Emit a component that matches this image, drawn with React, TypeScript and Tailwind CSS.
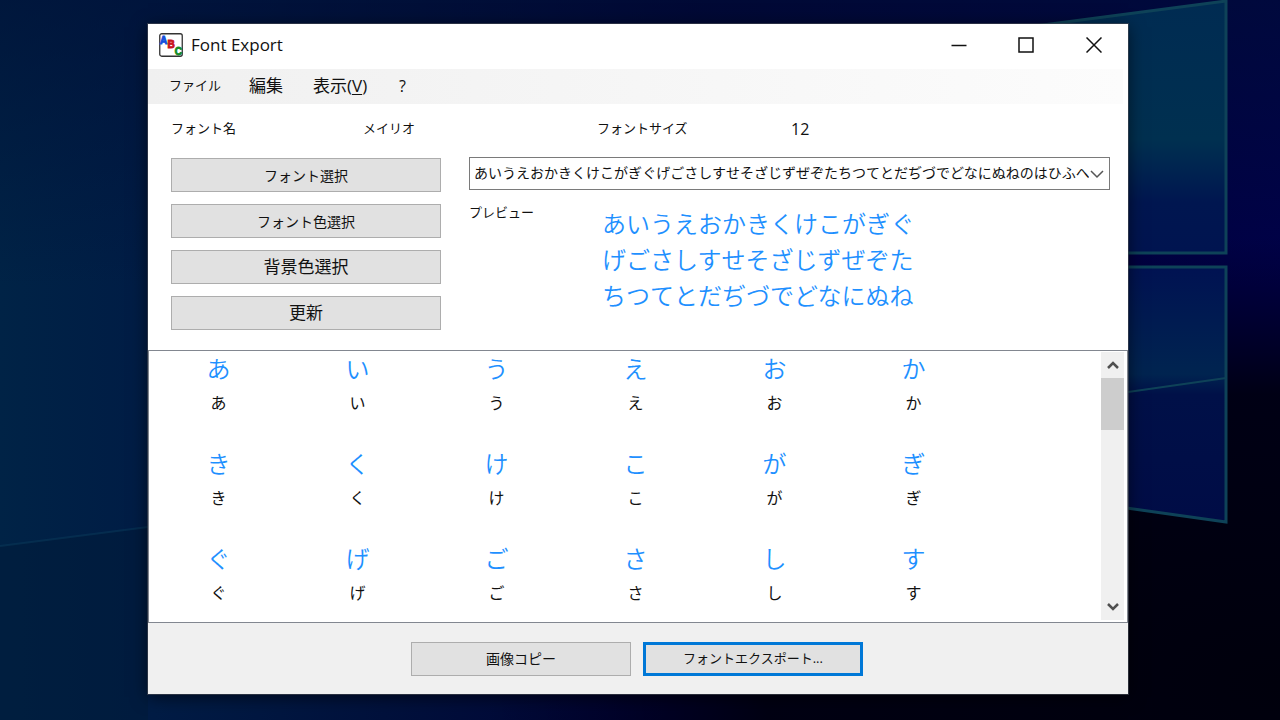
import { useState } from "react";

const kana =
  "あいうえおかきくけこがぎぐげごさしすせそざじずぜぞたちつてとだぢづでどなにぬねのはひふへ";

const previewLines = [
  "あいうえおかきくけこがぎぐ",
  "げごさしすせそざじずぜぞた",
  "ちつてとだぢづでどなにぬね",
];

const glyphs = Array.from(kana).slice(0, 18);

export default function App() {
  return (
    <main className="relative flex min-h-screen flex-col bg-[#00000f] pb-[26px] pl-[148px] pr-[152px] pt-6 font-['Open_Sans','Noto_Sans_CJK_JP',sans-serif] text-[#111]">
      <Wallpaper />
      <section className="relative flex flex-1 flex-col bg-white shadow-[0_0_0_1px_rgba(70,75,85,0.6),0_3px_16px_rgba(0,0,0,0.6)]">
        <TitleBar />
        <MenuBar />
        <Settings />
        <GlyphList />
        <footer className="flex h-[71px] items-center justify-center gap-3 bg-[#f0f0f0] pr-[2px] text-[14px]">
          <button className="h-[34px] w-[220px] border border-[#adadad] bg-[#e1e1e1]">
            画像コピー
          </button>
          <button className="h-[34px] w-[220px] border-[3px] border-[#0078d7] bg-[#e1e1e1] text-[13px]">
            フォントエクスポート...
          </button>
        </footer>
      </section>
    </main>
  );
}

function TitleBar() {
  return (
    <header className="mb-[3px] flex h-[42px] items-center justify-between pl-[11px]">
      <div className="flex items-center gap-2">
        <AppIcon />
        <h1 className="text-[17px] leading-6">Font Export</h1>
      </div>
      <div className="flex h-full">
        <button aria-label="最小化" className="grid w-[67px] place-items-center">
          <svg width="16" height="16" viewBox="0 0 16 16" stroke="#111" strokeWidth="1.5">
            <path d="M0.5 8.5h15" />
          </svg>
        </button>
        <button aria-label="最大化" className="grid w-[67px] place-items-center">
          <svg width="16" height="16" viewBox="0 0 16 16" fill="none" stroke="#111" strokeWidth="1.5">
            <path d="M1 1h14v14H1z" />
          </svg>
        </button>
        <button aria-label="閉じる" className="grid w-[69px] place-items-center">
          <svg width="16" height="16" viewBox="0 0 16 16" stroke="#111" strokeWidth="1.5">
            <path d="M0.5 0.5l15 15M15.5 0.5l-15 15" />
          </svg>
        </button>
      </div>
    </header>
  );
}

function MenuBar() {
  return (
    <nav className="mr-[5px] flex h-[35px] items-center bg-linear-to-r from-[#f0f0f0] to-[#fcfcfc] pb-[2px] pl-[21px]">
      <button className="w-20 text-left text-[13px]">ファイル</button>
      <button className="w-16 text-left text-[17px]">編集</button>
      <button className="w-[86px] text-left text-[17px]">
        表示(<span className="underline underline-offset-2">V</span>)
      </button>
      <button className="text-[16px]">?</button>
    </nav>
  );
}

function Settings() {
  const [text, setText] = useState(kana);

  return (
    <section className="h-[246px] shrink-0 pl-[23px] pr-[18px]">
      <dl className="grid h-[53px] grid-cols-[192px_234px_194px_1fr] items-center pb-1 text-[13px]">
        <dt>フォント名</dt>
        <dd>メイリオ</dd>
        <dt>フォントサイズ</dt>
        <dd className="text-[16px]">12</dd>
      </dl>
      <div className="grid grid-cols-[270px_1fr] gap-7">
        <div className="flex flex-col gap-3 pt-px">
          <FormButton className="text-[14px]" label="フォント選択" />
          <FormButton className="text-[14px]" label="フォント色選択" />
          <FormButton className="text-[17px]" label="背景色選択" />
          <FormButton className="text-[17px]" label="更新" />
        </div>
        <div>
          <div className="relative">
            <select
              aria-label="文字"
              value={text}
              onChange={(e) => setText(e.target.value)}
              className="h-[33px] w-full appearance-none overflow-hidden border border-[#7a7a7a] bg-white pb-[2px] pl-1 pr-5 text-[14px]"
            >
              <option value={kana}>{kana}</option>
            </select>
            <svg
              className="pointer-events-none absolute right-[6px] top-[13px]"
              width="14"
              height="9"
              viewBox="0 0 14 9"
              fill="none"
              stroke="#555"
              strokeWidth="1.5"
            >
              <path d="M1 1l6 6 6-6" />
            </svg>
          </div>
          <div className="flex pt-4">
            <label htmlFor="preview" className="-mt-1 w-[133px] text-[13px] leading-5">
              プレビュー
            </label>
            <output
              id="preview"
              className="text-[24px] font-[350] leading-9 text-[#1e90ff]"
            >
              {previewLines.map((line) => (
                <span key={line} className="block whitespace-nowrap">
                  {line}
                </span>
              ))}
            </output>
          </div>
        </div>
      </div>
    </section>
  );
}

function FormButton({ label, className }: { label: string; className: string }) {
  return (
    <button className={`h-[34px] border border-[#adadad] bg-[#e1e1e1] ${className}`}>
      {label}
    </button>
  );
}

function GlyphList() {
  return (
    <section className="flex flex-1 border border-[#828790] bg-white">
      <ul className="grid flex-1 grid-cols-[repeat(auto-fill,139px)] content-start gap-y-[27px]">
        {glyphs.map((glyph) => (
          <li key={glyph} className="flex h-[68px] flex-col items-center">
            <span className="text-[24px] font-[350] leading-9 text-[#1e90ff]">{glyph}</span>
            <span className="text-[16px] leading-8">{glyph}</span>
          </li>
        ))}
      </ul>
      <div className="mb-[2px] mr-[3px] mt-px flex w-[23px] flex-col bg-[#f0f0f0]">
        <button aria-label="上へ" className="grid h-[26px] place-items-center">
          <svg width="12" height="8" viewBox="0 0 12 8" fill="none" stroke="#505050" strokeWidth="2.5">
            <path d="M1 7l5-5 5 5" />
          </svg>
        </button>
        <div className="h-[52px] bg-[#cdcdcd]" />
        <button aria-label="下へ" className="mt-auto grid h-[26px] place-items-center">
          <svg width="12" height="8" viewBox="0 0 12 8" fill="none" stroke="#505050" strokeWidth="2.5">
            <path d="M1 1l5 5 5-5" />
          </svg>
        </button>
      </div>
    </section>
  );
}

function AppIcon() {
  return (
    <svg width="24" height="24" viewBox="0 0 24 24" fontFamily="Liberation Sans" fontWeight="bold">
      <rect x="0.75" y="0.75" width="22.5" height="22.5" rx="2" fill="#fff" stroke="#333" strokeWidth="1.3" />
      <text x="1" y="11" fontSize="10" fill="#1450dc" stroke="#1450dc" strokeWidth="0.9">A</text>
      <text x="8.4" y="15" fontSize="10" fill="#c8141e" stroke="#c8141e" strokeWidth="0.9">B</text>
      <text x="15.7" y="22" fontSize="10" fill="#148c28" stroke="#148c28" strokeWidth="0.9">C</text>
    </svg>
  );
}

function Wallpaper() {
  return (
    <svg
      className="absolute inset-0 h-full w-full"
      viewBox="0 0 1280 720"
      preserveAspectRatio="none"
      aria-hidden="true"
    >
      <defs>
        <linearGradient id="base" x1="0" y1="0" x2="1" y2="0">
          <stop offset="0" stopColor="#002346" />
          <stop offset="0.12" stopColor="#001c45" />
          <stop offset="0.3" stopColor="#00113c" />
          <stop offset="0.55" stopColor="#000034" />
          <stop offset="1" stopColor="#000048" />
        </linearGradient>
        <linearGradient id="top" x1="0" y1="0" x2="0" y2="1">
          <stop offset="0" stopColor="#000f36" stopOpacity="0.6" />
          <stop offset="0.4" stopColor="#000f36" stopOpacity="0" />
        </linearGradient>
        <radialGradient id="corner" cx="1" cy="0.95" r="0.62">
          <stop offset="0" stopColor="#00000c" />
          <stop offset="0.65" stopColor="#00000f" stopOpacity="0.9" />
          <stop offset="1" stopColor="#000020" stopOpacity="0" />
        </radialGradient>
        <linearGradient id="paneTop" x1="0" y1="0" x2="0" y2="1">
          <stop offset="0" stopColor="#002b52" />
          <stop offset="0.55" stopColor="#003050" />
          <stop offset="0.8" stopColor="#001650" />
          <stop offset="1" stopColor="#001450" />
        </linearGradient>
        <linearGradient id="paneBottom" x1="0" y1="0" x2="0" y2="1">
          <stop offset="0" stopColor="#001252" />
          <stop offset="0.42" stopColor="#002450" />
          <stop offset="0.5" stopColor="#001048" />
          <stop offset="1" stopColor="#000c46" />
        </linearGradient>
      </defs>
      <rect width="1280" height="720" fill="url(#base)" />
      <rect width="1280" height="720" fill="url(#top)" />
      <rect width="1280" height="720" fill="url(#corner)" />
      <path d="M0 546L148 527V720H0z" fill="#001a38" opacity="0.5" />
      <path d="M0 546L148 527" stroke="#0a3c5c" strokeWidth="2" opacity="0.5" />
      <path d="M1020 28L1226 1V253H1020z" fill="url(#paneTop)" />
      <path d="M1020 267H1226V522L1020 493z" fill="url(#paneBottom)" />
      <path
        d="M1020 28L1226 1V253H1020M1020 267H1226V522L1020 493"
        fill="none"
        stroke="#0e4258"
        strokeWidth="3"
      />
      <path d="M1128 392L1226 378" stroke="#0e4258" strokeWidth="2" />
    </svg>
  );
}
